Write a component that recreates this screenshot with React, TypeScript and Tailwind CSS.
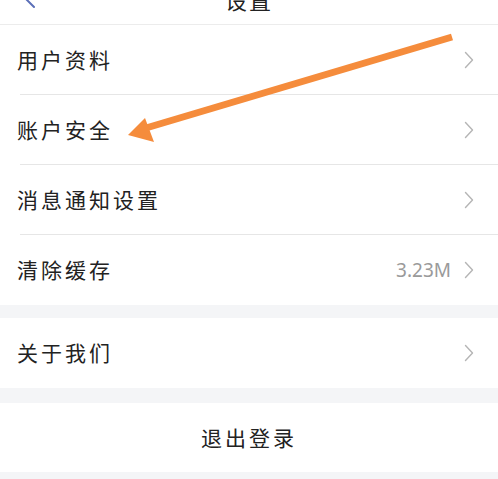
import { ReactNode } from 'react';

const font = { fontFamily: '"Noto Sans CJK SC", "Noto Sans", sans-serif' };

const Chevron = () => (
  <svg width="10" height="18" viewBox="0 0 10 18" fill="none" className="shrink-0">
    <path d="M1.5 1.5 L8.5 9 L1.5 16.5" stroke="#b5b5b5" strokeWidth="1.4" strokeLinecap="round" strokeLinejoin="round" />
  </svg>
);

interface RowProps {
  label: string;
  extra?: ReactNode;
  divider?: boolean;
  height?: string;
}

const Row = ({ label, extra, divider }: RowProps) => (
  <div className="relative bg-white">
    <div className={`flex ${divider ? 'h-[69px]' : 'h-[70px]'} items-center justify-between pr-[24px] pl-[17px]`}>
      <span className="text-[21px] tracking-[3px] text-[#222]">{label}</span>
      <div className="flex items-center gap-[13px]">
        {extra}
        <Chevron />
      </div>
    </div>
    {divider && <div className="ml-[20px] h-px bg-[#e6e6e6]" />}
  </div>
);

export default function App() {
  return (
    <div className="relative h-[479px] w-[498px] overflow-hidden bg-[#f4f5f7]" style={font}>
      <div className="relative -mt-[25px] flex h-[50px] items-center justify-center border-b border-[#ececec] bg-white">
        <svg width="14" height="22" viewBox="0 0 14 22" fill="none" className="absolute top-[12px] left-[22px]">
          <path d="M12 2 L3 11 L12 20" stroke="#5b6fb8" strokeWidth="2" strokeLinecap="round" strokeLinejoin="round" />
        </svg>
        <span className="text-[22px] tracking-[2px] text-[#222]">设置</span>
      </div>

      <Row label="用户资料" divider />
      <Row label="账户安全" divider />
      <Row label="消息通知设置" divider />
      <Row
        label="清除缓存"
        extra={
          <span className="text-[19px] text-[#9a9a9a]" style={{ fontFamily: '"Noto Sans", sans-serif' }}>
            3.23M
          </span>
        }
      />

      <div className="h-[13px]" />
      <Row label="关于我们" />

      <div className="h-[15px]" />
      <div className="flex h-[69px] items-center justify-center bg-white">
        <span className="text-[21px] tracking-[3px] text-[#222]">退出登录</span>
      </div>

      <svg className="pointer-events-none absolute top-0 left-0" width="498" height="479" viewBox="0 0 498 479">
        <line x1="452" y1="37" x2="146" y2="128" stroke="#f58c3c" strokeWidth="7" />
        <polygon points="128,135 145,118 154,142" fill="#f58c3c" />
      </svg>
    </div>
  );
}
